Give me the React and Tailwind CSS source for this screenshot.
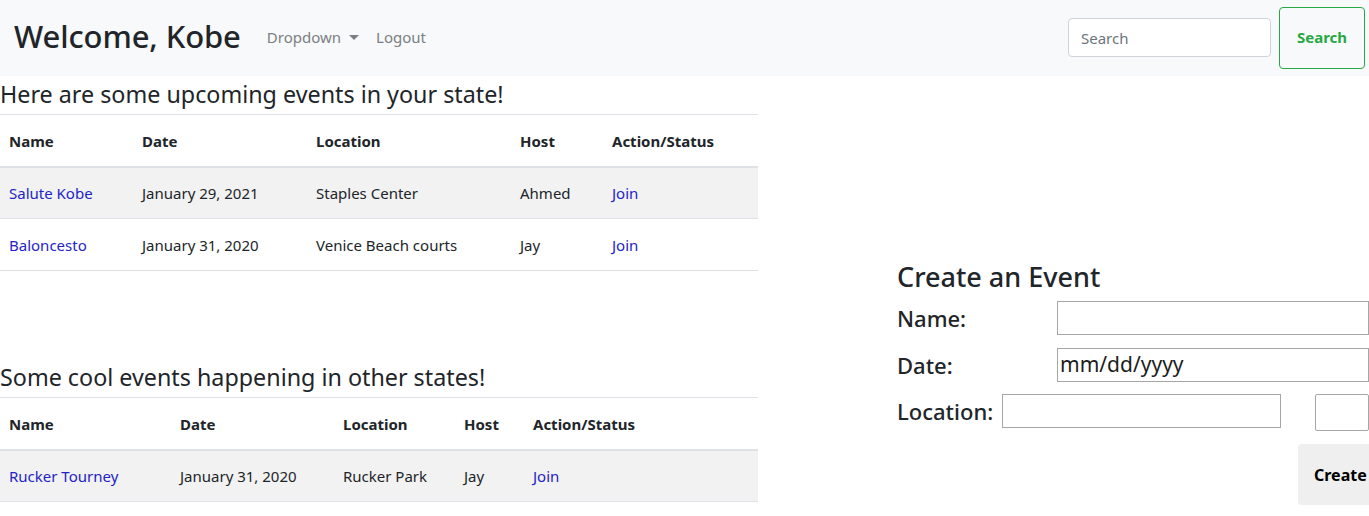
import React from "react";

const font = { fontFamily: '"Noto Sans", "Open Sans", Arial, sans-serif' };

const upcoming = [
  { name: "Salute Kobe", date: "January 29, 2021", location: "Staples Center", host: "Ahmed" },
  { name: "Baloncesto", date: "January 31, 2020", location: "Venice Beach courts", host: "Jay" },
];

const other = [
  { name: "Rucker Tourney", date: "January 31, 2020", location: "Rucker Park", host: "Jay" },
];

function EventTable({ rows, widths }) {
  return (
    <table className="w-[758px] table-fixed border-collapse text-[15px] text-[#212529]">
      <colgroup>
        {widths.map((w, i) => (
          <col key={i} style={{ width: w }} />
        ))}
      </colgroup>
      <thead>
        <tr className="h-[52px] border-t border-[#dee2e6] border-b-2">
          {["Name", "Date", "Location", "Host", "Action/Status"].map((h) => (
            <th key={h} className="text-left font-bold px-[9px] align-middle pt-[1px]">
              {h}
            </th>
          ))}
        </tr>
      </thead>
      <tbody>
        {rows.map((r, i) => (
          <tr key={r.name} className={`h-[52px] border-b border-[#dee2e6] ${i % 2 === 0 ? "bg-[#f2f2f2]" : ""}`}>
            <td className="px-[9px] pt-[1px] text-[#2323c8]">{r.name}</td>
            <td className="px-[9px] pt-[1px]">{r.date}</td>
            <td className="px-[9px] pt-[1px]">{r.location}</td>
            <td className="px-[9px] pt-[1px]">{r.host}</td>
            <td className="px-[9px] pt-[1px] text-[#2323c8]">Join</td>
          </tr>
        ))}
      </tbody>
    </table>
  );
}

export default function App() {
  return (
    <div className="w-[1369px] h-[516px] overflow-hidden bg-white" style={font}>
      <nav className="h-[76px] bg-[#f8f9fa] flex items-center pl-[14px] pr-[4px]">
        <span className="text-[31px] font-medium text-[#212529] tracking-[-0.1px] -mt-[4px]">Welcome, Kobe</span>
        <div className="flex items-center ml-[26px] text-[15px] text-[#7b7f84] -mt-[1px]">
          <span>Dropdown</span>
          <span className="ml-[8px] w-0 h-0 border-l-[5px] border-r-[5px] border-t-[5px] border-l-transparent border-r-transparent border-t-[#7b7f84]" />
          <span className="ml-[17px]">Logout</span>
        </div>
        <div className="ml-auto flex items-center -mt-[1px]">
          <input
            placeholder="Search"
            className="w-[203px] h-[39px] border border-[#ced4da] rounded-[4px] bg-white px-[12px] text-[15px] placeholder-[#6c757d] outline-none"
          />
          <button className="ml-[8px] w-[86px] h-[62px] border border-[#28a745] rounded-[4px] text-[#28a745] font-bold text-[15px]">
            Search
          </button>
        </div>
      </nav>

      <div className="flex">
        <div className="w-[758px]">
          <h2 className="text-[23.3px] leading-[38px] text-[#212529] -mt-[1px] mb-[1px]">Here are some upcoming events in your state!</h2>
          <EventTable rows={upcoming} widths={[133, 174, 204, 92, 155]} />
          <h2 className="mt-[87px] mb-[1px] text-[23.3px] leading-[38px] text-[#212529]">Some cool events happening in other states!</h2>
          <EventTable rows={other} widths={[171, 163, 121, 69, 234]} />
        </div>

        <div className="ml-[139px] mt-[183px] flex-1 text-[#212529]">
          <h3 className="text-[27px] leading-[36px] font-medium">Create an Event</h3>
          <div className="flex items-center h-[40px] mt-[3px]">
            <label className="w-[160px] text-[22px] font-medium">Name:</label>
            <input className="flex-1 h-[34px] border border-[#a6a6a6] bg-white outline-none" />
          </div>
          <div className="flex items-center h-[40px] mt-[7px]">
            <label className="w-[160px] text-[22px] font-medium">Date:</label>
            <div className="flex-1 h-[34px] border border-[#a6a6a6] bg-white flex items-center pl-[2px] text-[21px] text-[#1c1c1c]">
              mm/dd/yyyy
            </div>
          </div>
          <div className="flex items-center h-[40px] mt-[6px]">
            <label className="text-[22px] font-medium">Location:</label>
            <input className="ml-[9px] w-[279px] h-[34px] border border-[#a6a6a6] bg-white outline-none" />
            <div className="ml-[34px] flex-1 h-[37px] mt-[3px] border border-[#a6a6a6] rounded-[2px] bg-white" />
          </div>
          <div className="flex justify-end mt-[13px]">
            <button className="w-[71px] h-[61px] bg-[#efefef] rounded-l-[4px] text-[16px] font-bold text-black text-left pl-[16px] whitespace-nowrap overflow-hidden">
              Create
            </button>
          </div>
        </div>
      </div>
    </div>
  );
}
